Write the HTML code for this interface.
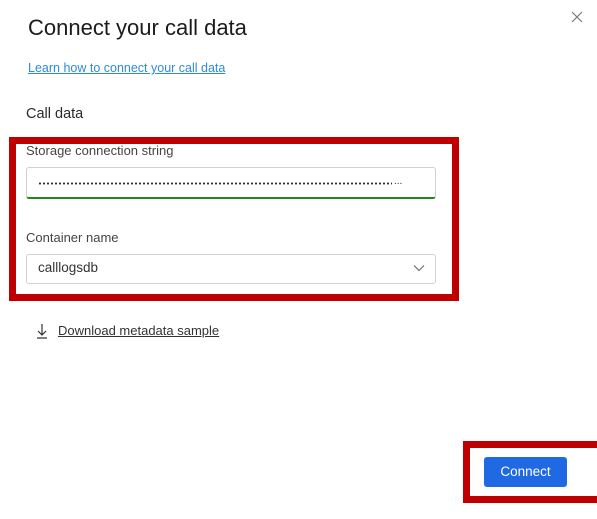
<!DOCTYPE html>
<html><head><style>
body{margin:0;width:597px;height:519px;background:#fff;position:relative;overflow:hidden;font-family:"Segoe UI","Liberation Sans",sans-serif;color:#242424}
.a{position:absolute}
</style></head><body>
<div class="a" style="left:28px;top:15px;font-size:22px;font-weight:500;color:#1b1b1b">Connect your call data</div>
<svg class="a" style="left:571px;top:11px" width="12" height="12" viewBox="0 0 12 12"><path d="M1 1L11 11M11 1L1 11" stroke="#777" stroke-width="1.2"/></svg>
<div class="a" style="left:28px;top:61px;font-size:12.5px;color:#2c8be0;text-decoration:underline">Learn how to connect your call data</div>
<div class="a" style="left:26px;top:106px;font-size:14.5px;font-weight:500;color:#2a2a2a">Call data</div>
<div class="a" style="left:9px;top:137px;width:436px;height:150px;border:7px solid #c00000"></div>
<div class="a" style="left:26px;top:143px;font-size:13px;color:#444">Storage connection string</div>
<div class="a" style="left:26px;top:167px;width:408px;height:29px;border:1px solid #d1d1d1;border-bottom:2px solid #1e8a1e;border-radius:3px;box-sizing:content-box"></div>
<div class="a" style="left:38px;top:182px;width:354px;height:3px;background:radial-gradient(circle,#333 0.9px,transparent 1.3px) 0 0/4px 3px repeat-x"></div>
<div class="a" style="left:394px;top:176px;font-size:10px;color:#333">...</div>
<div class="a" style="left:26px;top:230px;font-size:13px;color:#444">Container name</div>
<div class="a" style="left:26px;top:254px;width:408px;height:28px;border:1px solid #d1d1d1;border-radius:3px"></div>
<div class="a" style="left:38px;top:260px;font-size:13.5px;color:#333">calllogsdb</div>
<svg class="a" style="left:413px;top:264px" width="12" height="8" viewBox="0 0 12 8"><path d="M1 1.5L6 6.5L11 1.5" stroke="#666" stroke-width="1.1" fill="none"/></svg>
<svg class="a" style="left:36px;top:323px" width="12" height="16" viewBox="0 0 12 16"><path d="M6 1V12M2 8L6 12L10 8M1 15H11" stroke="#333" stroke-width="1.2" fill="none"/></svg>
<div class="a" style="left:58px;top:323px;font-size:13px;color:#333;text-decoration:underline">Download metadata sample</div>
<div class="a" style="left:463px;top:441px;width:134px;height:48px;border:7px solid #c00000;border-right:none"></div>
<div class="a" style="left:484px;top:457px;width:83px;height:30px;background:#1f6ae3;border-radius:3px;color:#fff;font-size:13.5px;text-align:center;line-height:30px">Connect</div>
</body></html>
